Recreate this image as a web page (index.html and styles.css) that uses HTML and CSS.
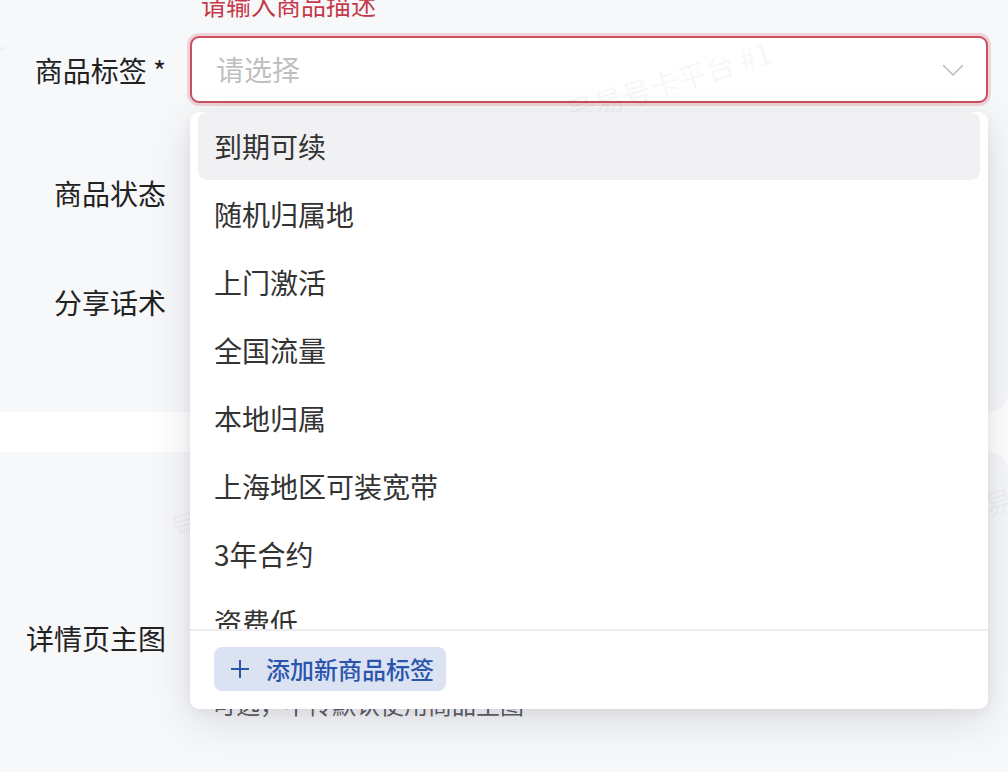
FILE: index.html
```html
<!DOCTYPE html>
<html lang="zh-CN">
<head>
<meta charset="utf-8">
<title>商品编辑</title>
<link rel="stylesheet" href="styles.css">
</head>
<body>
<div class="page">
  <section class="card card-top">
    <div class="error-line">请输入商品描述</div>

    <div class="row row-tag">
      <div class="label">商品标签 *</div>
      <div class="field">
        <div class="select">
          <span class="placeholder">请选择</span>
          <svg class="chev" width="22" height="13" viewBox="0 0 22 13"><path d="M1.5 1.5 L11 11 L20.5 1.5" fill="none" stroke="#bdbdbd" stroke-width="1.6" stroke-linecap="round" stroke-linejoin="round"/></svg>
        </div>
        <div class="dropdown">
          <ul class="options">
            <li class="option active">到期可续</li>
            <li class="option">随机归属地</li>
            <li class="option">上门激活</li>
            <li class="option">全国流量</li>
            <li class="option">本地归属</li>
            <li class="option">上海地区可装宽带</li>
            <li class="option">3年合约</li>
            <li class="option">资费低</li>
          </ul>
          <div class="dropdown-footer">
            <button class="add-btn" type="button">
              <svg class="plus" width="20" height="20" viewBox="0 0 20 20"><path d="M10 1 V19 M1 10 H19" stroke="#2b55ad" stroke-width="2" fill="none"/></svg>
              <span>添加新商品标签</span>
            </button>
          </div>
        </div>
      </div>
    </div>

    <div class="row row-status">
      <div class="label">商品状态</div>
      <div class="field">
        <div class="switch"></div>
      </div>
    </div>

    <div class="row row-share">
      <div class="label">分享话术</div>
      <div class="field">
        <div class="textarea"></div>
      </div>
    </div>
  </section>

  <section class="card card-detail">
    <div class="row row-detail">
      <div class="label label-detail">详情页主图</div>
      <div class="field field-detail">
        <div class="upload"></div>
        <div class="hint">可选，不传默认使用商品主图</div>
      </div>
    </div>
  </section>

  <div class="watermarks">
    <span class="wm wm1">号易号卡平台 #1</span>
    <span class="wm wm2">号易号卡平台 #1</span>
    <span class="wm wm3">号易号卡平台 #1</span>
    <span class="wm wm4">号易号卡平台 #1</span>
  </div>
</div>
</body>
</html>
```

FILE: styles.css
```css
* { box-sizing: border-box; }

html, body {
  margin: 0;
  padding: 0;
  background: #ffffff;
}

body {
  width: 1008px;
  height: 772px;
  overflow: hidden;
  font-family: "Noto Sans CJK SC", "Noto Sans", sans-serif;
  color: #222;
}

.page {
  position: relative;
  width: 1008px;
  height: 772px;
  overflow: hidden;
}

.card {
  background: #f7f8fa;
  display: flex;
  flex-direction: column;
  width: 1008px;
}

.card-top {
  padding-bottom: 76px;
  border-bottom-right-radius: 20px;
}

.card-detail {
  margin-top: 40px;
  padding-top: 36px;
  border-top-right-radius: 20px;
  min-height: 400px;
}

.error-line {
  margin-top: -8px;
  margin-left: 201px;
  font-size: 25px;
  line-height: 25px;
  height: 25px;
  color: #c43a4b;
}

.row {
  display: flex;
  align-items: center;
  gap: 25px;
}

.label {
  width: 166px;
  flex: none;
  text-align: right;
  font-size: 28px;
  line-height: 40px;
  color: #222;
  white-space: nowrap;
}

.field {
  position: relative;
  width: 798px;
  flex: none;
  margin-left: -1px;
}

.row-tag { margin-top: 19px; }
.row-status { margin-top: 56px; height: 68px; }
.row-share { margin-top: 41px; height: 68px; }

.select {
  height: 67px;
  border: 2px solid #c8505f;
  border-radius: 9px;
  background: #ffffff;
  box-shadow: 0 0 0 3px #efd3d8;
  display: flex;
  align-items: center;
  justify-content: space-between;
  padding: 0 22px 0 24px;
}

.placeholder {
  font-size: 28px;
  color: #bfbfbf;
  line-height: 40px;
  margin-top: -2px;
}

.chev { display: block; margin-top: 2px; }

.dropdown {
  position: absolute;
  left: 0;
  top: 76px;
  width: 798px;
  height: 597px;
  background: #ffffff;
  border-radius: 9px;
  box-shadow: 0 12px 44px rgba(20, 20, 40, 0.12), 0 3px 12px rgba(20, 20, 40, 0.05);
  display: flex;
  flex-direction: column;
  z-index: 10;
  overflow: hidden;
}

.options {
  list-style: none;
  margin: 0;
  padding: 0 8px;
  height: 517px;
  overflow: hidden;
  flex: none;
}

.option {
  height: 68px;
  flex: none;
  display: flex;
  align-items: center;
  padding-left: 16px;
  font-size: 28px;
  color: #333;
  border-radius: 9px;
}

.option.active { background: #f1f1f4; }

.dropdown-footer {
  border-top: 2px solid #ececf1;
  padding: 16px 24px 0;
  flex: 1;
}

.add-btn {
  display: flex;
  align-items: center;
  gap: 16px;
  height: 44px;
  padding: 0 12px 0 16px;
  border: none;
  border-radius: 8px;
  background: #dbe3f3;
  color: #2b55ad;
  font-family: "Noto Sans CJK SC", "Noto Sans", sans-serif;
  font-size: 24px;
  font-weight: 500;
  line-height: 44px;
}

.plus { display: block; }

.switch {
  width: 80px;
  height: 44px;
  border-radius: 22px;
  background: #ddd;
}

.textarea {
  height: 120px;
  background: #fff;
  border-radius: 8px;
}

.row-detail { align-items: flex-start; }
.label-detail { padding-top: 130px; line-height: 40px; }

.field-detail {
  padding-left: 22px;
  display: flex;
  flex-direction: column;
}

.upload {
  width: 160px;
  height: 160px;
  border-radius: 10px;
  background: #fff;
  border: 2px dashed #ddd;
}

.hint {
  margin-top: 41px;
  font-size: 24px;
  line-height: 30px;
  color: #5e5e66;
  white-space: nowrap;
}

.watermarks {
  position: absolute;
  inset: 0;
  pointer-events: none;
  z-index: 5;
}

.wm {
  position: absolute;
  width: 220px;
  height: 40px;
  line-height: 40px;
  font-size: 29px;
  color: rgba(0, 0, 0, 0.05);
  white-space: nowrap;
  transform: rotate(-17deg);
  transform-origin: center;
}

.wm1 { left: 562px; top: 60px; }
.wm2 { left: -204px; top: 46px; }
.wm3 { left: 166px; top: 476px; }
.wm4 { left: 952px; top: 462px; }
```
